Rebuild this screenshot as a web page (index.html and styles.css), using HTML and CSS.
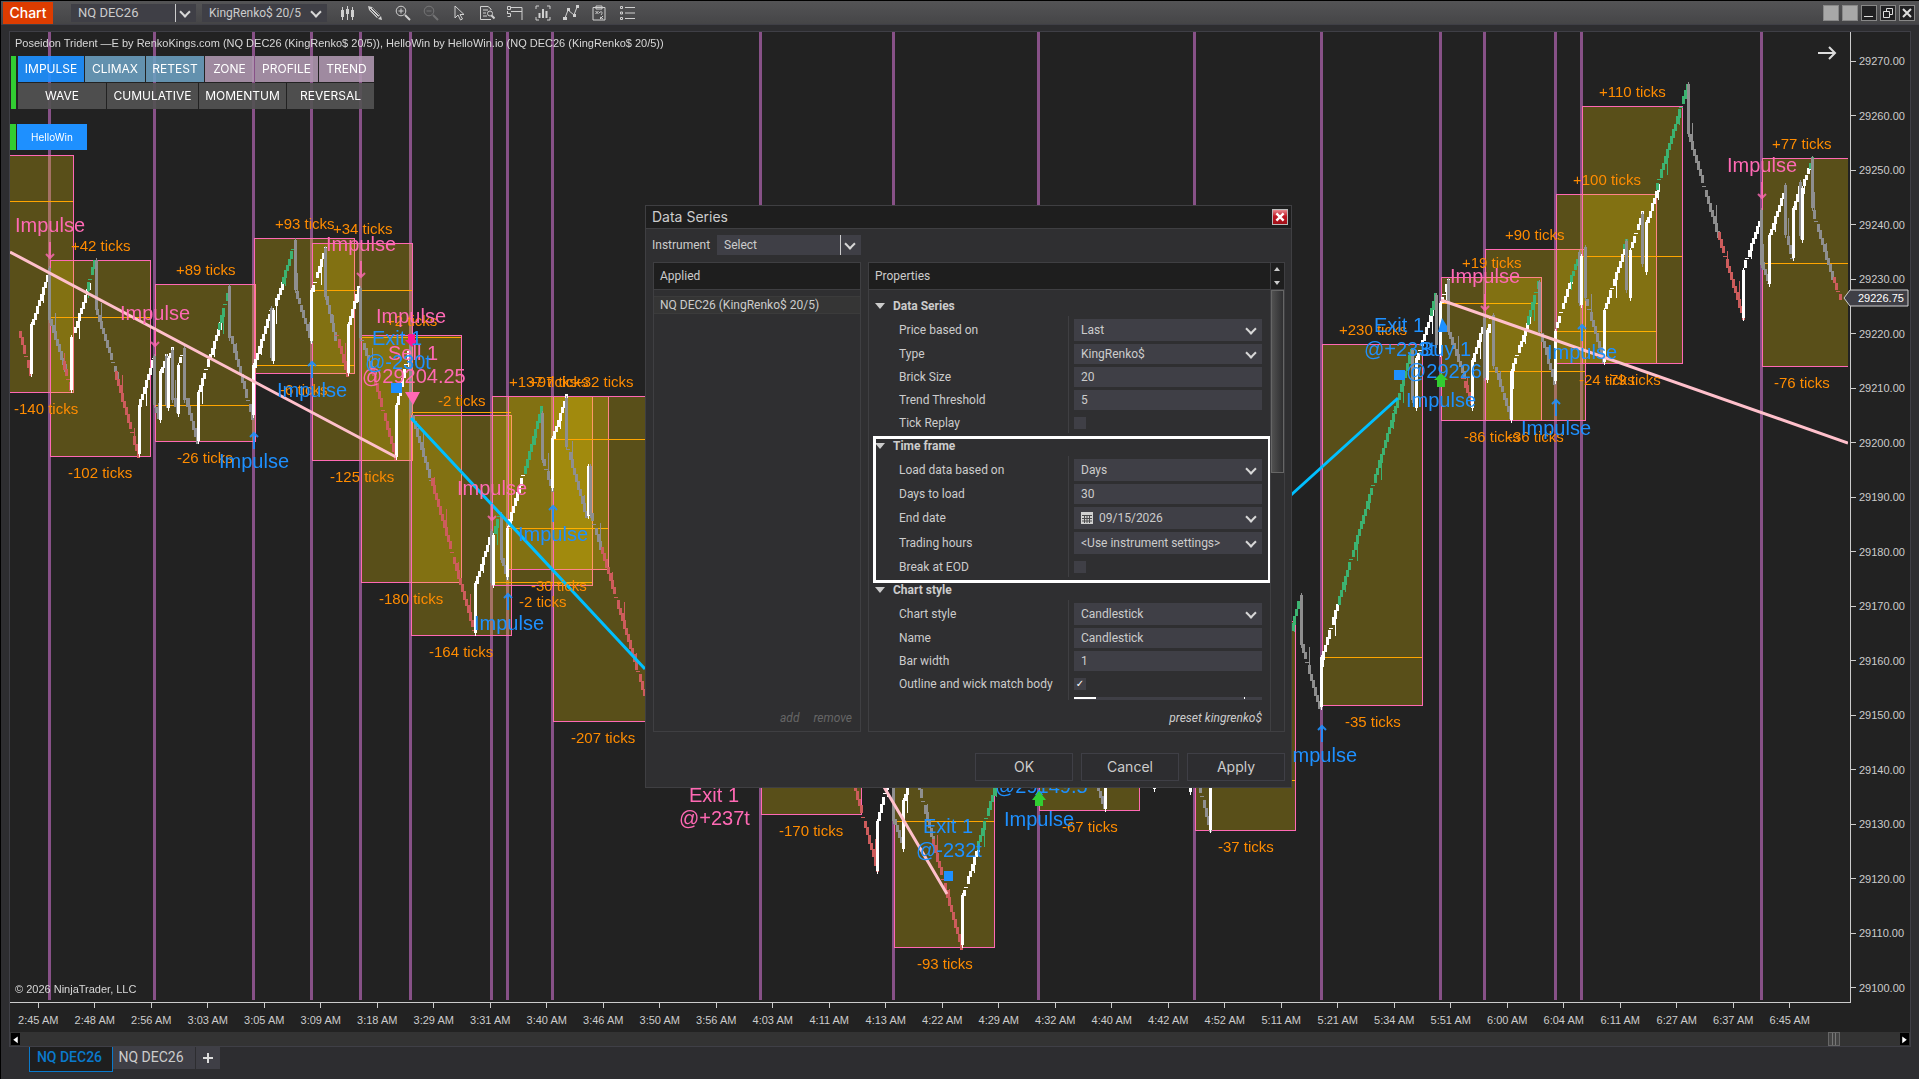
FILE: index.html
```html
<!DOCTYPE html>
<html lang="en">
<head>
<meta charset="utf-8">
<title>Chart</title>
<link rel="stylesheet" href="styles.css">
<script src="chart.js" defer></script>
</head>
<body>
<header class="titlebar">
  <h1 class="tag">Chart</h1>
  <label class="combo split bar-combo"><select aria-label="Instrument"><option>NQ DEC26</option></select></label>
  <label class="combo bar-combo"><select aria-label="Interval"><option>KingRenko$ 20/5</option></select></label>
  <nav class="tools">
    <button aria-label="Bars"><svg viewBox="0 0 16 16"><path class="s" d="M3.500 2v13M8.500 1v14M13.500 2v13"/><path class="f" d="M2 5h3v7H2zM7 4h3v5H7zM12 5h3v7h-3z"/></svg></button>
    <button aria-label="Draw"><svg viewBox="0 0 16 16"><path class="f" d="M1 1l4 1 8 8-3 3-8-8zM11 14l3-3 1 4z"/><path class="dark" d="M3 4l8 8M5 3l7 7"/></svg></button>
    <button aria-label="Zoom in"><svg viewBox="0 0 16 16"><circle class="s" cx="6" cy="6" r="4.800"/><path class="s" d="M3.500 6h5M6 3.500v5"/><path class="b" d="M10 10l5 5"/></svg></button>
    <button aria-label="Zoom out" disabled><svg viewBox="0 0 16 16"><circle class="s" cx="6" cy="6" r="4.800"/><path class="s" d="M3.500 6h5"/><path class="b" d="M10 10l5 5"/></svg></button>
    <button aria-label="Cursor"><svg viewBox="0 0 16 16"><path class="s" d="M4 1v12l3-3 2.500 5 2-1-2.500-4.500h4z"/></svg></button>
    <button aria-label="Data box"><svg viewBox="0 0 16 16"><path class="s" d="M12 5V4L9 1.500H1.500v13H12M4 5h5M4 8h3M4 11h4"/><circle class="s" cx="11" cy="8.500" r="2.500"/><path class="b" d="M12.500 10.500l3 3"/></svg></button>
    <button aria-label="Chart trader"><svg viewBox="0 0 16 16"><path class="s" d="M.5 1.500h3v3h-3zM4 2.500h11V15M4 6.500h11M.5 8.500h3v3h-3M.5 6v3"/></svg></button>
    <button aria-label="Strategy analyzer"><svg viewBox="0 0 16 16"><path class="s" d="M1 4V1h3M12 1h3v3M15 12v3h-3M4 15H1v-3"/><path class="b" d="M4.500 13V8M8 13V4M11.500 13V6"/></svg></button>
    <button aria-label="Indicators"><svg viewBox="0 0 16 16"><path class="s" d="M2 13l3-8 6 5 3-8"/><path class="f" d="M0 12h4v3H0zM4 3h3v3H4zM10 9h3v3h-3zM13 0h3v3h-3z"/></svg></button>
    <button aria-label="Strategies"><svg viewBox="0 0 16 16"><path class="s" d="M2 2.500h12V15H2zM5 1h6v3H5zM4.500 6l3 3M7.500 6l-3 3M9 12l3 2M12 11l-3 3M8 8c3-3 4 0 2 2"/></svg></button>
    <button aria-label="Properties"><svg viewBox="0 0 16 16"><path class="s" d="M1.500 1.500h2v2h-2zM1.500 7h2v2h-2zM1.500 12.500h2v2h-2zM6 2.500h10M6 8h10M6 13.500h10"/></svg></button>
  </nav>
  <div class="window-buttons">
    <button class="block" aria-label="Link instrument"></button>
    <button class="block" aria-label="Link interval"></button>
    <button aria-label="Minimize"><svg viewBox="0 0 14 14"><path d="M2 10.500h9"/></svg></button>
    <button aria-label="Restore"><svg viewBox="0 0 14 14"><path d="M5.500 5V2.500h6v6H9M2.500 5.500h6v6h-6z"/></svg></button>
    <button aria-label="Close"><svg viewBox="0 0 14 14"><path class="cross" d="M3 3l8 8M11 3l-8 8"/></svg></button>
  </div>
</header>

<main class="frame">
  <div class="chart">
    <div class="plot">
      <svg class="canvas" viewBox="10 32 1840 970" preserveAspectRatio="xMaxYMin slice" role="img" aria-label="NQ DEC26 price chart">
        <defs>
          <clipPath id="panel"><rect x="10" y="32" width="1838" height="968"/></clipPath>
          <path id="up" d="M0 17V1M-4 5L0 1L4 5"/>
          <path id="down" d="M0 0v16M-4 12L0 16L4 12"/>
        </defs>
        <g clip-path="url(#panel)">
          <g id="signals"></g>
          <g id="zones"></g>
          <g id="candles"></g>
          <g class="trade-loss">
            <path d="M10 252L396 457M884 787L947 894M1441 300L1848 443"/>
          </g>
          <g class="trade-win"><path d="M411 418L645 669M1291 495L1398 398"/></g>
          <g class="pink-arrows">
            <use href="#down" x="50" y="242"/><use href="#down" x="155" y="330"/><use href="#down" x="361" y="261"/>
            <use href="#down" x="492" y="504"/><use href="#down" x="1485" y="294"/><use href="#down" x="1762" y="182"/>
          </g>
          <g class="blue-arrows">
            <use href="#up" x="254" y="432"/><use href="#up" x="312" y="361"/><use href="#up" x="553" y="505"/>
            <use href="#up" x="508" y="593"/><use href="#up" x="1322" y="725"/><use href="#up" x="1582" y="324"/><use href="#up" x="1556" y="399"/>
          </g>
          <g class="ticks">
            <text x="14" y="414">-140 ticks</text><text x="71" y="251">+42 ticks</text><text x="68" y="478">-102 ticks</text>
            <text x="176" y="275">+89 ticks</text><text x="177" y="463">-26 ticks</text><text x="275" y="229">+93 ticks</text>
            <text x="330" y="482">-125 ticks</text><text x="333" y="234">+34 ticks</text><text x="280" y="395">-6 ticks</text>
            <text x="386" y="326">+2 ticks</text><text x="438" y="406">-2 ticks</text><text x="379" y="604">-180 ticks</text>
            <text x="429" y="657">-164 ticks</text><text x="509" y="387">+137 ticks</text><text x="529" y="387">+97 ticks</text>
            <text x="574" y="387">+32 ticks</text><text x="531" y="591">-30 ticks</text><text x="519" y="607">-2 ticks</text>
            <text x="571" y="743">-207 ticks</text><text x="779" y="836">-170 ticks</text><text x="917" y="969">-93 ticks</text>
            <text x="1062" y="832">-67 ticks</text><text x="1218" y="852">-37 ticks</text><text x="1339" y="335">+230 ticks</text>
            <text x="1345" y="727">-35 ticks</text><text x="1462" y="268">+19 ticks</text><text x="1464" y="442">-86 ticks</text>
            <text x="1508" y="442">-36 ticks</text><text x="1579" y="385">-24 ticks</text><text x="1605" y="385">-79 ticks</text>
            <text x="1505" y="240">+90 ticks</text><text x="1573" y="185">+100 ticks</text><text x="1599" y="97">+110 ticks</text>
            <text x="1772" y="149">+77 ticks</text><text x="1774" y="388">-76 ticks</text>
          </g>
          <g class="shorts">
            <text x="15" y="232">Impulse</text><text x="120" y="320">Impulse</text><text x="326" y="251">Impulse</text>
            <text x="376" y="323">Impulse</text><text x="457" y="495">Impulse</text><text x="1450" y="283">Impulse</text><text x="1727" y="172">Impulse</text>
            <text x="388" y="360">Sell 1</text><text x="362" y="383">@29204.25</text>
            <text x="689" y="802">Exit 1</text><text x="679" y="825">@+237t</text>
            <path d="M405 392h15l-7 13z"/>
            <path class="sell" d="M408 334h7v6h3l-6 7-7-7h3z"/>
          </g>
          <g class="longs">
            <text x="219" y="468">Impulse</text><text x="277" y="397">Impulse</text><text x="474" y="630">Impulse</text>
            <text x="518" y="541">Impulse</text><text x="1004" y="826">Impulse</text><text x="1287" y="762">Impulse</text>
            <text x="1406" y="407">Impulse</text><text x="1547" y="359">Impulse</text><text x="1521" y="435">Impulse</text>
            <text x="372" y="345">Exit 1</text><text x="365" y="369">@-230t</text>
            <text x="923" y="833">Exit 1</text><text x="916" y="857">@-232t</text><text x="995" y="793">@29149.5</text>
            <text x="1374" y="332">Exit 1</text><text x="1364" y="356">@+233t</text><text x="1420" y="356">Buy 1</text><text x="1406" y="378">@29226</text>
            <path d="M391 383h11v10h-11zM944 871h9v10h-9zM1394 370h11v10h-11zM1442 318l5 8v6h-9zM1039 789l4 6h-8z"/>
            <path class="buy" d="M1039 791l7 9h-3v6h-8v-6h-3zM1441 373l7 7h-3v7h-8v-7h-3z"/>
          </g>
        </g>
        <g class="notes">
          <text x="15" y="47">Poseidon Trident —E by RenkoKings.com (NQ DEC26 (KingRenko$ 20/5)), HelloWin by HelloWin.io (NQ DEC26 (KingRenko$ 20/5))</text>
          <text x="15" y="993">© 2026 NinjaTrader, LLC</text>
        </g>
        <path class="next" d="M1818 53h17M1829 47l6 6-6 6"/>
      </svg>
      <div class="pads">
        <div class="pad-rows">
          <div class="row-one">
            <button class="impulse">IMPULSE</button><button class="steel">CLIMAX</button><button class="steel">RETEST</button><button class="mauve">ZONE</button><button class="mauve">PROFILE</button><button class="mauve">TREND</button>
          </div>
          <div class="row-two">
            <button>WAVE</button><button>CUMULATIVE</button><button>MOMENTUM</button><button>REVERSAL</button>
          </div>
        </div>
        <div class="hello"><button>HelloWin</button></div>
      </div>
    </div>
    <ol class="prices">
      <li>29270.00</li><li>29260.00</li><li>29250.00</li><li>29240.00</li><li>29230.00</li><li>29220.00</li><li>29210.00</li><li>29200.00</li><li>29190.00</li><li>29180.00</li><li>29170.00</li><li>29160.00</li><li>29150.00</li><li>29140.00</li><li>29130.00</li><li>29120.00</li><li>29110.00</li><li>29100.00</li>
    </ol>
    <div class="last-price"><svg viewBox="0 0 66 18"><path d="M1 9L7 1H65V17H7z"/></svg><span>29226.75</span></div>
    <ol class="times">
      <li>2:45 AM</li><li>2:48 AM</li><li>2:56 AM</li><li>3:03 AM</li><li>3:05 AM</li><li>3:09 AM</li><li>3:18 AM</li><li>3:29 AM</li><li>3:31 AM</li><li>3:40 AM</li><li>3:46 AM</li><li>3:50 AM</li><li>3:56 AM</li><li>4:03 AM</li><li>4:11 AM</li><li>4:13 AM</li><li>4:22 AM</li><li>4:29 AM</li><li>4:32 AM</li><li>4:40 AM</li><li>4:42 AM</li><li>4:52 AM</li><li>5:11 AM</li><li>5:21 AM</li><li>5:34 AM</li><li>5:51 AM</li><li>6:00 AM</li><li>6:04 AM</li><li>6:11 AM</li><li>6:27 AM</li><li>6:37 AM</li><li>6:45 AM</li>
    </ol>
  </div>
  <div class="scroll-x">
    <button aria-label="Scroll left"><svg viewBox="0 0 8 12"><path d="M6 3v6L2 6z"/></svg></button>
    <span class="thumb"></span>
    <button aria-label="Scroll right"><svg viewBox="0 0 8 12"><path d="M2 3v6l4-3z"/></svg></button>
  </div>
</main>

<footer class="tabs">
  <button class="active">NQ DEC26</button><button class="tab">NQ DEC26</button><button class="add" aria-label="Add tab"><svg viewBox="0 0 12 12"><path d="M1 6h10M6 1v10"/></svg></button>
</footer>

<section class="dialog" role="dialog" aria-labelledby="dialog-title">
  <div class="dialog-title">
    <h2 id="dialog-title">Data Series</h2>
    <button class="close" aria-label="Close dialog"><svg viewBox="0 0 10 10"><path d="M2 2l6 6M8 2L2 8"/></svg></button>
  </div>
  <div class="instrument">
    <label for="instrument">Instrument</label>
    <span class="combo split"><select id="instrument"><option>Select</option></select></span>
  </div>
  <div class="panels">
    <div class="panel">
      <h3>Applied</h3>
      <ul class="applied"><li>NQ DEC26 (KingRenko$ 20/5)</li></ul>
      <div class="panel-foot"><button disabled>add</button><button disabled>remove</button></div>
    </div>
    <div class="panel properties">
      <div class="panel-main">
        <h3>Properties</h3>
        <div class="groups">
          <section class="group">
            <h4>Data Series</h4>
            <div class="rows">
              <div class="row"><label for="price">Price based on</label><span class="combo tall"><select id="price"><option>Last</option></select></span></div>
              <div class="row"><label for="type">Type</label><span class="combo"><select id="type"><option>KingRenko$</option></select></span></div>
              <div class="row"><label for="brick">Brick Size</label><input id="brick" type="text" value="20"></div>
              <div class="row"><label for="trend">Trend Threshold</label><input id="trend" type="text" value="5"></div>
              <div class="row"><label for="replay">Tick Replay</label><input id="replay" type="checkbox"></div>
            </div>
          </section>
          <section class="group highlighted">
            <h4>Time frame</h4>
            <div class="rows">
              <div class="row"><label for="load">Load data based on</label><span class="combo tall"><select id="load"><option>Days</option></select></span></div>
              <div class="row"><label for="days">Days to load</label><input id="days" type="text" value="30"></div>
              <div class="row"><label for="end">End date</label><span class="combo tall date"><svg viewBox="0 0 12 12"><path class="f" d="M0 0h12v12H0z"/><path class="dark" d="M1 3.500h10M1 6.500h10M1 9h10M3.500 4v7M6 4v7M8.500 4v7"/></svg><input id="end" type="text" value="09/15/2026"></span></div>
              <div class="row"><label for="hours">Trading hours</label><span class="combo tall"><select id="hours"><option>&lt;Use instrument settings&gt;</option></select></span></div>
              <div class="row"><label for="eod">Break at EOD</label><input id="eod" type="checkbox"></div>
            </div>
          </section>
          <section class="group">
            <h4>Chart style</h4>
            <div class="rows">
              <div class="row"><label for="style">Chart style</label><span class="combo tall"><select id="style"><option>Candlestick</option></select></span></div>
              <div class="row"><label for="name">Name</label><input id="name" type="text" value="Candlestick"></div>
              <div class="row"><label for="width">Bar width</label><input id="width" type="text" value="1"></div>
              <div class="row"><label for="outline">Outline and wick match body</label><input id="outline" type="checkbox" checked></div>
              <div class="row"><span></span><span class="swatch"></span></div>
            </div>
          </section>
        </div>
        <div class="panel-foot"><button>preset kingrenko$</button></div>
      </div>
      <div class="scroll-y"><div class="arrows"><svg viewBox="0 0 12 26"><path d="M3 8L6 4l3 4zM3 18l3 4 3-4z"/></svg></div><span class="thumb-y"></span></div>
    </div>
  </div>
  <div class="actions"><button>OK</button><button>Cancel</button><button>Apply</button></div>
</section>
</body>
</html>
```
FILE: styles.css
```css
* { box-sizing: border-box; }
body, h1, h2, h3, h4, ol, ul { margin: 0; padding: 0; }
ol, ul { list-style: none; }
body {
  position: relative;
  display: flex;
  flex-direction: column;
  min-height: 100vh;
  background: #2d2d30;
  border-left: 1px solid #000;
  color: #ccc;
  font: 12px/16px Roboto, "Liberation Sans", sans-serif;
}
button, input, select { font: inherit; color: inherit; border: 0; border-radius: 0; padding: 0; margin: 0; background: none; }
svg { display: block; }

/* title bar */
.titlebar {
  display: flex;
  align-items: center;
  height: 25px;
  padding: 2px 5px 1px 2px;
  background: linear-gradient(#545456, #454547);
  border-top: 1px solid #000;
  border-bottom: 1px solid #3f3f46;
}
.tag { width: 50px; margin-right: 18px; background: #dd3c00; color: #fff; font: 500 14px/22px Inter, sans-serif; text-align: center; }
.combo { position: relative; display: flex; align-items: center; height: 20px; background: #3f3f46; }
.combo select, .combo input { appearance: none; width: 100%; height: 100%; padding: 0 20px 0 7px; }
.combo::after {
  content: "";
  position: absolute;
  right: 7px;
  top: 5px;
  width: 6px;
  height: 6px;
  border: solid #d8d8d8;
  border-width: 0 2px 2px 0;
  transform: rotate(45deg);
  pointer-events: none;
}
.combo.split::before { content: ""; position: absolute; right: 20px; top: 0; bottom: 0; width: 1px; background: #ccc; }
.combo.tall { height: 22px; }
.combo.tall::after { top: 6px; }
.bar-combo { width: 125px; height: 18px; margin-right: 6px; font-size: 13px; }
.bar-combo select { padding-right: 16px; }
.bar-combo:not(.split) { font-size: 12px; }
.bar-combo::after { top: 4px; }
.tools { display: flex; }
.tools button { width: 28px; height: 18px; display: grid; place-items: center; }
.tools svg { width: 16px; height: 16px; }
.tools button:disabled { opacity: .3; }
.s { fill: none; stroke: #d0d0d0; }
.f { fill: #d0d0d0; }
.b { fill: none; stroke: #d0d0d0; stroke-width: 2; }
.dark { fill: none; stroke: #4a4a4c; }
.window-buttons { display: flex; gap: 5px; margin-left: auto; }
.window-buttons button { width: 14px; height: 14px; background: #202022; outline: 1px solid #888; }
.window-buttons .block { background: #a8a8a8; }
.window-buttons path { fill: none; stroke: #ddd; }
.window-buttons .cross { stroke-width: 2; }

/* chart */
.frame { flex: 1; display: flex; flex-direction: column; margin: 6px 8px 0 8px; border: 1px solid #3f3f46; background: #222; }
.chart { position: relative; flex: 1; display: grid; grid-template: 1fr 29px / 1fr 59px; font: 11px/14px "Liberation Sans", Arial, sans-serif; }
.plot { position: relative; border: solid #ccc; border-width: 0 1px 1px 0; }
.canvas { position: absolute; width: 100%; height: 100%; }
.signal { fill: #875187; }
.zone { fill: rgba(255, 215, 0, .25); stroke: #ff69b4; }
.mid { fill: #ffa500; }
.trade-loss { fill: none; stroke: #ffc0cb; stroke-width: 3; }
.trade-win { fill: none; stroke: #00bfff; stroke-width: 3; }
.pink-arrows { fill: none; stroke: #ff69b4; stroke-width: 2; opacity: .8; }
.blue-arrows { fill: none; stroke: #1e90ff; stroke-width: 2; opacity: .9; }
.ticks { fill: #ff8c00; font-size: 15px; }
.shorts { fill: #ff69b4; font-size: 20px; }
.longs { fill: #1e90ff; font-size: 20px; }
.sell { fill: #ff1493; }
.buy { fill: #32cd32; }
.notes { fill: #d8d8d8; font-size: 11px; }
.next { fill: none; stroke: #ddd; stroke-width: 2; }

.prices { grid-row: 1 / 3; grid-column: 2; display: grid; grid-auto-rows: 1fr; align-items: center; padding: 2px 0 17px; }
.prices li { display: flex; align-items: center; gap: 3px; }
.prices li::before { content: ""; width: 5px; height: 1px; background: #ccc; }
.times { grid-row: 2; grid-column: 1; display: grid; grid-auto-flow: column; grid-auto-columns: 1fr; padding-right: 33px; text-align: center; }
.times li::before { content: ""; display: block; width: 1px; height: 5px; margin: 0 auto 5px; background: #ccc; }
.last-price { position: absolute; right: 1px; top: 257px; width: 66px; height: 18px; color: #fff; }
.last-price path { fill: #3f3f46; stroke: #d0d0d0; }
.last-price span { position: absolute; left: 15px; top: 2px; }

/* indicator pads over the plot */
.pads { position: absolute; left: 0; top: 24px; font: 12px/16px Inter, sans-serif; color: #fff; }
.pad-rows { display: grid; gap: 1px; margin-left: 1px; padding-left: 7px; background: linear-gradient(#32cd32, #32cd32) 0 0 / 5px 100% no-repeat; }
.row-one, .row-two { display: grid; gap: 1px; }
.row-one { grid-template-columns: 66px 60px 58px 49px 63px 55px; }
.row-two { grid-template-columns: 88px 91px 87px 87px; }
.pads button { height: 26px; background: rgba(82, 82, 82, .92); text-align: center; }
.pads .impulse { background: rgba(30, 144, 255, .92); }
.pads .steel { background: rgba(108, 160, 194, .88); }
.pads .mauve { background: rgba(176, 152, 178, .88); }
.hello { margin-top: 15px; padding-left: 7px; background: linear-gradient(#32cd32, #32cd32) 0 0 / 6px 100% no-repeat; font-size: 10px; }
.pads .hello button { display: block; width: 70px; background: #1e90ff; }

/* horizontal scrollbar and tabs */
.scroll-x { display: flex; align-items: center; height: 14px; padding: 0 1px; background: #333; }
.scroll-x button { width: 9px; height: 12px; background: #000; }
.scroll-x path { fill: #fff; }
.thumb { width: 12px; height: 14px; margin: 0 60px 0 auto; background: linear-gradient(90deg, transparent 3px, #777 3px 4px, transparent 4px 6px, #777 6px 7px, transparent 7px), #444; border: 1px solid #666; }
.tabs { display: flex; align-items: flex-start; height: 32px; padding-left: 28px; font-size: 14px; }
.tabs button { padding-bottom: 3px; }
.tabs .active { width: 84px; height: 25px; padding: 0 3px 5px 0; background: #1e1e1e; color: #0a7acc; font-weight: 500; border: solid #0a7acc; border-width: 0 1px 1px; }
.tab { width: 82px; height: 22px; padding-right: 6px; background: #3f3f46; }
.tabs .add { width: 24px; height: 22px; margin-left: 1px; padding: 0; background: #3f3f46; display: grid; place-items: center; }
.add svg { width: 12px; height: 12px; }
.add path { stroke: #ddd; stroke-width: 2; }

/* data series dialog */
.dialog { position: absolute; left: 644px; top: 205px; width: 647px; background: #2f2f31; border: 1px solid #3f3f42; }
.dialog-title { display: flex; align-items: center; justify-content: space-between; height: 23px; padding: 0 3px 0 6px; background: #1e1e1e; border-bottom: 1px solid #3f3f42; }
.dialog-title h2 { font: 14px/16px Inter, sans-serif; }
.close { width: 16px; height: 16px; display: grid; place-items: center; background: linear-gradient(#e88a90, #c01824 45%, #a01018); border: 1px solid #bbb; }
.close svg { width: 12px; height: 12px; }
.close path { stroke: #fff; stroke-width: 2; }
.instrument { display: flex; align-items: center; padding: 6px 6px 7px; }
.instrument label { width: 65px; }
.instrument .combo { width: 144px; }
.panels { display: grid; grid-template-columns: 208px 1fr; gap: 7px; padding: 0 6px 0 7px; }
.panel { display: flex; flex-direction: column; border: 1px solid #3f3f42; }
.panel h3 { height: 27px; padding-left: 6px; background: #1e1e1e; border-bottom: 1px solid #3f3f42; font-size: 12px; font-weight: 400; line-height: 26px; }
.applied { flex: 1; padding-top: 6px; }
.applied li { height: 18px; padding-left: 6px; background: #353535; border: solid #3b3b3b; border-width: 1px 0; }
.panel-foot { display: flex; justify-content: flex-end; align-items: center; gap: 14px; height: 31px; padding: 4px 8px 0 0; font-style: italic; }
.panel-foot button:disabled { color: #666; }
.properties { flex-direction: row; }
.panel-main { flex: 1; }
.groups { display: grid; align-content: start; gap: 3px; height: 410px; padding-top: 6px; overflow: hidden; }
.group { position: relative; display: grid; }
.group h4 { display: flex; align-items: center; gap: 8px; height: 20px; padding-left: 6px; font-size: 12px; font-weight: 700; }
.group h4::before { content: ""; border: solid transparent; border-width: 6px 5px 0; border-top-color: #ccc; }
.rows { display: grid; gap: 3px; padding: 3px 8px 0 30px; background: linear-gradient(#3f3f42, #3f3f42) 199px 0 / 1px 100% no-repeat; }
.row { display: grid; grid-template-columns: 1fr 188px; align-items: center; min-height: 20px; }
.row input[type="text"] { width: 100%; height: 20px; padding-left: 7px; background: #3f3f46; }
.row .date { padding-left: 7px; }
.row .date input { background: none; padding-left: 6px; }
.date svg { flex: none; width: 12px; height: 12px; }
input[type="checkbox"] { appearance: none; width: 12px; height: 12px; background: #3f3f46; }
input[type="checkbox"]:checked::after { content: "✓"; display: block; font: 700 10px/12px "DejaVu Sans", sans-serif; text-align: center; color: #fff; }
.swatch { align-self: start; height: 20px; border-top: 2px solid #fff; background: #3f3f46; border-image: linear-gradient(90deg, #fff 24px, #3f3f46 24px 168px, #fff 168px 169px, #3f3f46 169px) 2; }
.highlighted::after { content: ""; position: absolute; inset: 0 -1px -6px 4px; border: 3px solid #fff; pointer-events: none; }
.group + .group { z-index: 1; }
.scroll-y { width: 14px; border-left: 1px solid #3f3f42; }
.arrows { height: 27px; background: #1e1e1e; border-bottom: 1px solid #3f3f42; }
.arrows svg { width: 12px; height: 26px; }
.arrows path { fill: #ccc; }
.thumb-y { display: block; height: 183px; border: 1px solid #666; background: linear-gradient(90deg, #505050, #2f2f31); }
.actions { display: flex; justify-content: flex-end; gap: 8px; padding: 21px 6px 6px; font: 14px/16px Inter, sans-serif; }
.actions button { width: 98px; height: 28px; background: #2d2d30; border: 1px solid #3f3f46; }
```
FILE: chart.js
```js
const NS = "http://www.w3.org/2000/svg";
const colors = { w: "#ffffff", g: "#8f8f8f", r: "#cd5c5c", m: "#3cb371" };

function rect(parent, x, y, w, h, attrs) {
  const el = document.createElementNS(NS, "rect");
  Object.entries({ x, y, width: w, height: h, ...attrs }).forEach(([k, v]) => el.setAttribute(k, v));
  parent.append(el);
}

// Vertical markers, one for each impulse signal.
const signals = [48, 153, 252, 310, 359, 409, 490, 506, 551, 759, 892, 1037, 1193, 1320, 1439, 1483, 1554, 1580, 1760];
const signalLayer = document.getElementById("signals");
signals.forEach(x => rect(signalLayer, x, 32, 3, 968, { class: "signal" }));

// Zones: left, top, right, bottom, entry level.
const zones = [
  [-20, 155, 73, 392, 201], [50, 260, 150, 456, 317], [155, 284, 255, 441, 405], [254, 238, 354, 373, 365],
  [312, 243, 412, 460, 290], [361, 335, 461, 582, 337], [411, 415, 511, 635, 412], [492, 396, 592, 585, 582],
  [508, 396, 608, 569, 528], [553, 396, 653, 721, 439], [761, 600, 861, 814, 700], [894, 700, 994, 947, 821],
  [1039, 700, 1139, 810, 720], [1195, 621, 1295, 830, 780], [1322, 344, 1422, 705, 657], [1441, 277, 1541, 420, 303],
  [1485, 249, 1585, 420, 371], [1556, 194, 1656, 363, 331], [1582, 106, 1682, 363, 256], [1762, 158, 1862, 366, 263]
];
const zoneLayer = document.getElementById("zones");
zones.forEach(([l, t, r, b, mid]) => {
  rect(zoneLayer, l + .5, t + .5, r - l, b - t, { class: "zone" });
  rect(zoneLayer, l + 1, mid, r - l - 1, 1, { class: "mid" });
});

// Candles in time order. Three numbers: a tall bar (x, top, bottom).
// Four numbers: a run of bricks (x, y to x, y).
const candles = `
r 20 334 30 371|w 31 324 374|w 33 322 48 272|g 49 268 320|g 51 322 64 368|r 64 365 70 386|w 71 337 390|w 75 330 88 286
m 88 286 94 264|g 96 260 310|g 97 312 116 375|r 116 375 137 454|w 139 405 454|w 140 403 153 358|g 154 356 405|g 156 410 158 415
w 160 371 420|w 162 370 166 358|g 166 356 405|w 168 358 408|w 170 355 172 350|g 172 350 400|g 175 402 177 409|w 178 365 414
w 180 360 184 350|g 184 348 400|g 187 402 197 440|w 198 392 441|w 200 388 219 326|m 219 326 229 290|g 229 286 338|g 232 340 251 415
w 253 365 415|w 255 363 270 310|g 271 308 358|w 273 310 361|w 276 302 283 280|m 283 280 294 243|g 295 240 290|g 297 295 310 340
w 311 290 341|w 313 288 324 250|g 325 248 297|g 327 300 335 336|r 337 335 347 373|w 348 324 373|w 350 320 358 290|g 360 288 338
g 362 340 372 370|r 373 372 395 455|w 396 405 457|w 398 400 408 355|g 410 340 413|g 413 418 431 480|r 432 482 473 630|w 475 583 633
w 477 580 490 535|g 491 531 583|w 493 535 585|m 495 530 499 516|g 501 514 560|g 503 562 506 576|w 507 528 577|w 509 523 523 475
m 525 470 541 410|g 542 413 460|g 544 462 551 488|w 552 438 488|w 554 435 565 398|g 566 398 447|g 568 449 586 514|w 588 466 516
g 590 466 515|g 592 517 600 545|r 602 550 647 705|r 853 780 876 868|w 877 821 871|w 879 816 887 785|g 893 780 821|g 895 822 900 840
w 903 800 849|w 905 797 908 785|g 919 785 932 840|r 933 842 961 945|w 962 895 945|w 964 893 977 848|m 978 845 996 785|g 1098 788 1103 806
w 1105 780 809|w 1154 784 789|w 1190 780 792|g 1200 788 1209 828|w 1210 780 830|m 1292 627 1297 605|g 1301 595 645|g 1303 648 1319 705
w 1321 657 707|w 1323 655 1339 600|m 1339 600 1395 410|m 1395 410 1410 352|g 1412 350 400|w 1416 358 408|w 1418 356 1431 312|m 1431 312 1435 297
g 1436 295 345|w 1440 303 354|w 1442 300 1447 282|g 1448 280 332|g 1450 335 1463 375|r 1463 378 1471 400|w 1472 360 408|w 1474 357 1482 330
g 1484 318 378|w 1487 330 380|w 1489 328 1491 318|g 1493 315 366|g 1496 370 1509 415|w 1511 371 420|w 1513 367 1528 320|m 1528 320 1538 285
g 1539 282 332|g 1542 337 1554 380|w 1555 331 381|w 1557 325 1571 280|m 1571 278 1577 262|g 1579 252 303|w 1581 256 305|g 1585 247 298
g 1587 302 1603 358|w 1604 310 362|w 1606 306 1623 252|m 1624 246 1625 242|g 1626 241 290|w 1630 250 298|w 1632 245 1641 215|g 1642 214 264
w 1646 222 272|w 1648 220 1657 188|m 1657 186 1687 87|g 1688 84 134|g 1690 138 1718 234|r 1719 236 1742 316|w 1743 270 318|w 1745 264 1760 218
g 1761 210 265|g 1763 266 1768 283|w 1769 235 284|w 1771 232 1784 190|g 1785 185 235|g 1788 240 1792 258|w 1793 208 258|w 1795 205 1799 190
g 1800 182 236|w 1802 188 240|w 1804 182 1809 166|m 1810 166 1811 160|g 1812 158 208|g 1814 214 1832 275|r 1834 280 1839 297`;

const layer = document.getElementById("candles");
let count = 0;
candles.trim().split(/[|\n]/).forEach(item => {
  const [tone, ...n] = item.split(" ");
  const fill = colors[tone];
  const [x1, y1, x2, y2] = n.map(Number);
  if (n.length === 3) {
    rect(layer, x1 - 1, y1, 3, x2 - y1, { fill });
    rect(layer, x1, y1 - 2, 1, x2 - y1 + 5, { fill });
    return;
  }
  const steps = Math.max(1, Math.round((x2 - x1) / 2));
  const rise = (y2 - y1) / steps;
  for (let i = 0; i <= steps; i++) {
    const x = x1 + i * 2;
    const y = Math.round(y1 + i * rise);
    const h = Math.round(Math.min(9, Math.max(5, Math.abs(rise) + (count % 3))));
    count++;
    if (count % 11 === 4) {
      rect(layer, x - 2, y, 4, 1, { fill });
      continue;
    }
    rect(layer, x - 1, y - (h >> 1), 3, h, { fill });
    if (count % 6 === 0) {
      const len = 12 + (count % 4) * 5;
      rect(layer, x, rise > 0 ? y - len : y, 1, len, { fill });
    }
  }
});
```
